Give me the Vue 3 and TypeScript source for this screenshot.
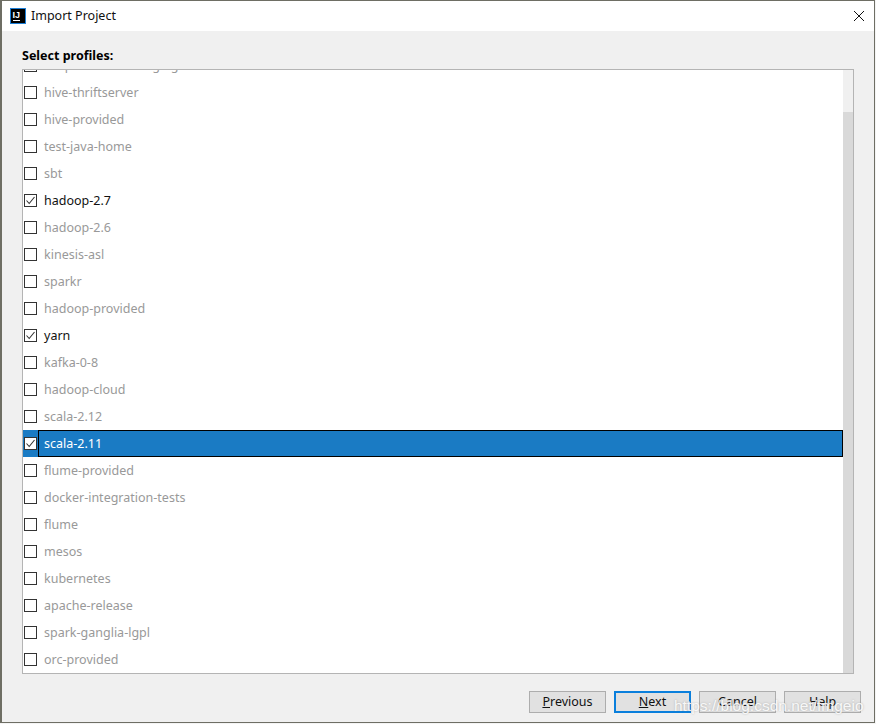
<script setup lang="ts">
interface Profile { name: string; on?: boolean; sel?: boolean }
const profiles: Profile[] = [
  { name: 'snapshots-and-staging' },
  { name: 'hive-thriftserver' },
  { name: 'hive-provided' },
  { name: 'test-java-home' },
  { name: 'sbt' },
  { name: 'hadoop-2.7', on: true },
  { name: 'hadoop-2.6' },
  { name: 'kinesis-asl' },
  { name: 'sparkr' },
  { name: 'hadoop-provided' },
  { name: 'yarn', on: true },
  { name: 'kafka-0-8' },
  { name: 'hadoop-cloud' },
  { name: 'scala-2.12' },
  { name: 'scala-2.11', on: true, sel: true },
  { name: 'flume-provided' },
  { name: 'docker-integration-tests' },
  { name: 'flume' },
  { name: 'mesos' },
  { name: 'kubernetes' },
  { name: 'apache-release' },
  { name: 'spark-ganglia-lgpl' },
  { name: 'orc-provided' },
]
const buttons = [
  { key: 'P', rest: 'revious' },
  { key: 'N', rest: 'ext', primary: true },
  { key: '', rest: 'Cancel' },
  { key: '', rest: 'Help' },
]
</script>

<template>
  <div class="window">
    <header class="titlebar">
      <svg class="logo" width="16" height="16" viewBox="0 0 16 16">
        <rect x="0.5" y="0.5" width="15" height="15" fill="#000" stroke="#1d7fd6" />
        <text x="2.5" y="9.5" class="logo-text">IJ</text>
        <rect x="3" y="12" width="7" height="1" fill="#fff" />
      </svg>
      <span class="title">Import Project</span>
      <svg class="close" width="12" height="12" viewBox="0 0 12 12">
        <path d="M1 1 L11 11 M11 1 L1 11" stroke="#111" stroke-width="1" fill="none" />
      </svg>
    </header>
    <main class="body">
      <div class="heading">Select profiles:</div>
      <div class="listbox">
        <div class="viewport">
          <div class="rows">
            <div v-for="p in profiles" :key="p.name" class="row" :class="{ selected: p.sel }">
              <span class="box">
                <svg v-if="p.on" width="11" height="11" viewBox="0 0 11 11">
                  <path d="M1.5 5.5 L4.2 8.5 L9.5 2" fill="none" stroke="#333" stroke-width="1.1" />
                </svg>
              </span>
              <span class="label" :class="{ active: p.on }">{{ p.name }}</span>
            </div>
          </div>
        </div>
        <div class="scrollbar"><div class="thumb"></div></div>
      </div>
      <footer class="actions">
        <button v-for="b in buttons" :key="b.rest" class="btn" :class="{ primary: b.primary }">
          <u v-if="b.key">{{ b.key }}</u>{{ b.rest }}
        </button>
      </footer>
    </main>
    <div class="watermark">https://blog.csdn.net/fmgeio</div>
  </div>
</template>

<style>
html, body { margin: 0; background: #f4f4f4; }
</style>

<style scoped>
.window {
  position: relative;
  box-sizing: border-box;
  width: 875px;
  height: 723px;
  border: 1px solid #6e6e64;
  border-left-width: 2px;
  background: #f0f0f0;
  display: flex;
  flex-direction: column;
  font-family: "Noto Sans", sans-serif;
  font-size: 12.5px;
  overflow: hidden;
}
.titlebar {
  height: 30px;
  flex: none;
  background: #fff;
  display: flex;
  align-items: center;
  padding: 0 9px 0 8px;
}
.logo { flex: none; }
.logo-text { font: bold 9px "Liberation Sans", sans-serif; fill: #fff; }
.title { margin-left: 5px; color: #111; position: relative; top: -1px; }
.close { margin-left: auto; }
.body {
  flex: 1;
  min-height: 0;
  display: flex;
  flex-direction: column;
  padding: 0 20px 0 20px;
}
.heading {
  height: 38px;
  line-height: 49px;
  font-weight: 700;
  color: #000;
}
.listbox {
  box-sizing: border-box;
  height: 605px;
  flex: none;
  border: 1px solid #b4b4b4;
  background: #fff;
  display: flex;
}
.viewport { flex: 1; min-width: 0; overflow: hidden; }
.rows { margin-top: -18px; }
.row {
  box-sizing: border-box;
  height: 27px;
  display: flex;
  align-items: center;
  padding-left: 1px;
}
.box {
  box-sizing: border-box;
  flex: none;
  width: 13px;
  height: 13px;
  border: 1px solid #333;
  background: #fff;
  display: flex;
  align-items: center;
  justify-content: center;
}
.label {
  margin-left: 7px;
  color: #999;
}
.label.active { color: #111; }
.row.selected { background: #1a7bc4; position: relative; }
.row.selected .label { color: #fff; }
.row.selected::after {
  content: "";
  position: absolute;
  left: 15px;
  right: 0;
  top: 0;
  bottom: 0;
  border: 1px solid #000;
}
.scrollbar { flex: none; width: 10px; background: #f0f0f0; display: flex; flex-direction: column; }
.thumb { margin-top: 42px; flex: 1; background: #d9d9d9; }
.actions {
  flex: 1;
  display: flex;
  justify-content: flex-end;
  gap: 8px;
  padding-top: 17px;
  align-items: flex-start;
  margin-right: -7px;
}
.btn {
  box-sizing: border-box;
  width: 77px;
  height: 22px;
  border: 1px solid #adadad;
  background: #e1e1e1;
  color: #111;
  font: inherit;
  padding: 0 0 2px;
  line-height: 17px;
}
.btn.primary { border: 2px solid #0a7fdc; line-height: 15px; }
.watermark {
  position: absolute;
  left: 672px;
  top: 696px;
  color: rgba(255, 255, 255, 0.9);
  font-family: "Liberation Sans", sans-serif;
  font-size: 15.5px;
  white-space: nowrap;
  text-shadow: 0 0 2px rgba(130, 130, 130, 0.55);
}
</style>
